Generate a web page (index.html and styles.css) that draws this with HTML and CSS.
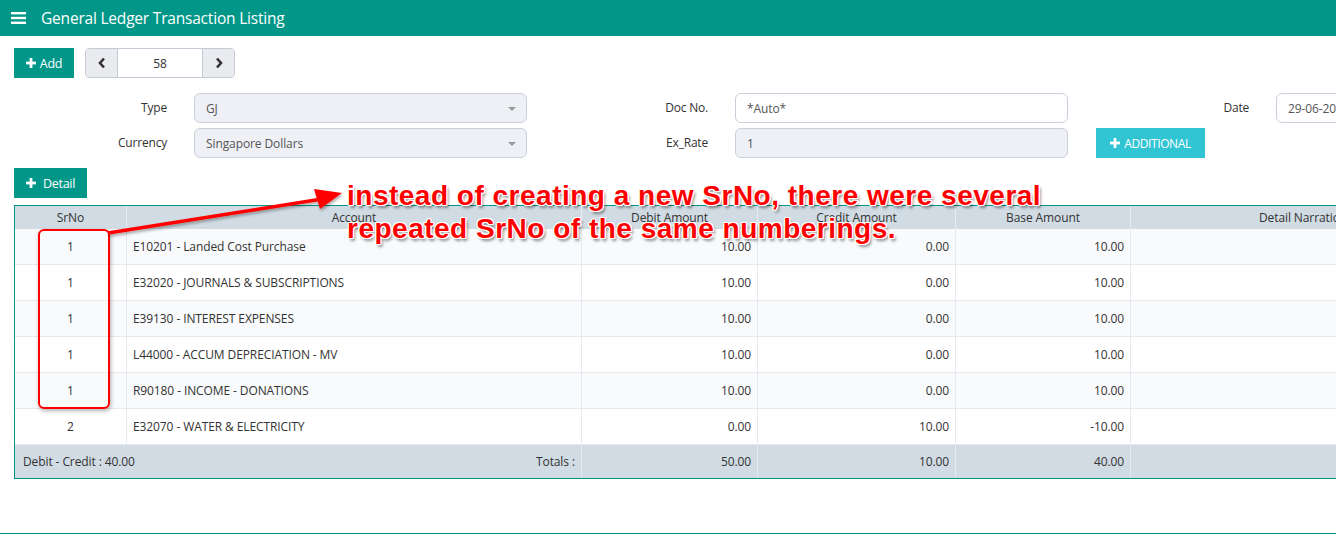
FILE: index.html
```html
<!DOCTYPE html>
<html>
<head>
<meta charset="utf-8">
<link rel="stylesheet" href="styles.css">
</head>
<body>
<div class="page">
  <header class="topbar">
    <svg class="hamburger" width="15" height="12" viewBox="0 0 15 12"><rect x="0" y="0" width="15" height="2.4" fill="#fff"/><rect x="0" y="4.8" width="15" height="2.4" fill="#fff"/><rect x="0" y="9.6" width="15" height="2.4" fill="#fff"/></svg>
    <span class="title">General Ledger Transaction Listing</span>
  </header>

  <main class="main">
    <div class="toolbar">
      <button class="btn btn-teal btn-add"><svg class="plus" width="10" height="10" viewBox="0 0 10 10"><rect x="3.6" y="0" width="2.8" height="10" fill="#fff"/><rect x="0" y="3.6" width="10" height="2.8" fill="#fff"/></svg>Add</button>
      <div class="pager">
        <span class="pg-btn"><svg width="8" height="12" viewBox="0 0 8 12"><path d="M6 1.5 L2 6 L6 10.5" stroke="#333" stroke-width="2.6" fill="none"/></svg></span>
        <span class="pg-val">58</span>
        <span class="pg-btn"><svg width="8" height="12" viewBox="0 0 8 12"><path d="M2 1.5 L6 6 L2 10.5" stroke="#333" stroke-width="2.6" fill="none"/></svg></span>
      </div>
    </div>

    <div class="form">
      <label class="lbl">Type</label>
      <div class="field select">GJ<span class="caret"></span></div>
      <label class="lbl">Doc No.</label>
      <div class="field white">*Auto*</div>
      <label class="lbl">Date</label>
      <div class="field white">29-06-2021</div>

      <label class="lbl">Currency</label>
      <div class="field select">Singapore Dollars<span class="caret"></span></div>
      <label class="lbl">Ex_Rate</label>
      <div class="field">1</div>
      <div class="cell-left"><button class="btn btn-cyan"><svg class="plus" width="10" height="10" viewBox="0 0 10 10"><rect x="3.6" y="0" width="2.8" height="10" fill="#fff"/><rect x="0" y="3.6" width="10" height="2.8" fill="#fff"/></svg>ADDITIONAL</button></div>
      <div></div>
    </div>

    <button class="btn btn-teal btn-detail"><svg class="plus" width="10" height="10" viewBox="0 0 10 10"><rect x="3.6" y="0" width="2.8" height="10" fill="#fff"/><rect x="0" y="3.6" width="10" height="2.8" fill="#fff"/></svg>Detail</button>

    <div class="grid-wrap">
      <table class="grid">
        <colgroup>
          <col class="c-sr"><col class="c-acc"><col class="c-deb"><col class="c-cre"><col class="c-base"><col class="c-nar">
        </colgroup>
        <thead>
          <tr><th>SrNo</th><th>Account</th><th>Debit Amount</th><th>Credit Amount</th><th>Base Amount</th><th>Detail Narration</th></tr>
        </thead>
        <tbody>
          <tr><td class="ctr">1</td><td>E10201 - Landed Cost Purchase</td><td class="num">10.00</td><td class="num">0.00</td><td class="num">10.00</td><td></td></tr>
          <tr><td class="ctr">1</td><td>E32020 - JOURNALS &amp; SUBSCRIPTIONS</td><td class="num">10.00</td><td class="num">0.00</td><td class="num">10.00</td><td></td></tr>
          <tr><td class="ctr">1</td><td>E39130 - INTEREST EXPENSES</td><td class="num">10.00</td><td class="num">0.00</td><td class="num">10.00</td><td></td></tr>
          <tr><td class="ctr">1</td><td>L44000 - ACCUM DEPRECIATION - MV</td><td class="num">10.00</td><td class="num">0.00</td><td class="num">10.00</td><td></td></tr>
          <tr><td class="ctr">1</td><td>R90180 - INCOME - DONATIONS</td><td class="num">10.00</td><td class="num">0.00</td><td class="num">10.00</td><td></td></tr>
          <tr><td class="ctr">2</td><td>E32070 - WATER &amp; ELECTRICITY</td><td class="num">0.00</td><td class="num">10.00</td><td class="num">-10.00</td><td></td></tr>
        </tbody>
        <tfoot>
          <tr><td colspan="2" class="foot-left"><span class="fl">Debit - Credit : 40.00</span><span class="fr">Totals :</span></td><td class="num">50.00</td><td class="num">10.00</td><td class="num">40.00</td><td></td></tr>
        </tfoot>
      </table>
    </div>
  </main>
  <footer class="bottom"></footer>

  <div class="highlight"></div>
  <svg class="arrow" width="360" height="80" viewBox="0 0 360 80">
    <defs><filter id="sh" x="-10%" y="-50%" width="120%" height="200%"><feDropShadow dx="1" dy="2" stdDeviation="1.5" flood-color="#000" flood-opacity="0.35"/></filter></defs>
    <g filter="url(#sh)">
      <path d="M108 45 L322 11" stroke="#f00" stroke-width="3.5" fill="none"/>
      <path d="M342 5 L314 1 L320 21 Z" fill="#f00"/>
    </g>
  </svg>
  <div class="note">instead of creating a new SrNo, there were several<br>repeated SrNo of the same numberings.</div>
</div>
</body>
</html>
```

FILE: styles.css
```css
* { box-sizing: border-box; }
html, body { margin: 0; padding: 0; }
body {
  width: 1336px;
  height: 536px;
  overflow: hidden;
  background: #fff;
  font-family: "Open Sans", "Noto Sans", sans-serif;
  color: #333;
}
.page {
  position: relative;
  width: 1336px;
  height: 536px;
  display: flex;
  flex-direction: column;
  overflow: hidden;
}
.topbar {
  height: 36px;
  background: #009688;
  display: flex;
  align-items: center;
  padding-left: 11px;
  flex: none;
}
.hamburger { margin-right: 15px; }
.title {
  color: #fff;
  font-size: 15.5px;
  letter-spacing: -0.2px;
}
.main {
  flex: 1;
  padding: 12px 0 0 14px;
}
.toolbar {
  display: flex;
  gap: 11px;
  height: 30px;
}
.btn {
  border: none;
  color: #fff;
  font-family: "Open Sans", sans-serif;
  font-size: 12.5px;
  letter-spacing: -0.3px;
  display: inline-flex;
  align-items: center;
  justify-content: center;
  gap: 4px;
  height: 30px;
  padding: 0;
  cursor: pointer;
}
.btn-teal { background: #009688; }
.btn-add { width: 60px; }
.btn-cyan { background: #31c4d2; width: 109px; font-size: 12px; letter-spacing: -0.4px; margin-left: 1px; }
.plus { flex: none; }
.pager {
  width: 150px;
  height: 30px;
  border: 1px solid #c5cad6;
  border-radius: 4px;
  display: flex;
  overflow: hidden;
}
.pg-btn {
  width: 32px;
  background: #e9ebef;
  display: flex;
  align-items: center;
  justify-content: center;
}
.pg-btn:first-child { border-right: 1px solid #c5cad6; }
.pg-btn:last-child { border-left: 1px solid #c5cad6; }
.pg-val {
  flex: 1;
  background: #fff;
  display: flex;
  align-items: center;
  justify-content: center;
  font-size: 12px;
}
.form {
  margin-top: 15px;
  display: grid;
  grid-template-columns: 153px 333px 154px 333px 154px 333px;
  grid-auto-rows: 30px;
  column-gap: 27px;
  row-gap: 5px;
}
.lbl {
  text-align: right;
  font-size: 12px;
  letter-spacing: -0.2px;
  color: #333;
  align-self: start;
  padding-top: 6px;
}
.field {
  border: 1px solid #c9cfdb;
  border-radius: 6px;
  background: #eef0f5;
  font-size: 12px;
  letter-spacing: -0.1px;
  color: #555;
  display: flex;
  align-items: center;
  padding-left: 11px;
  position: relative;
}
.field.white { background: #fff; }
.caret {
  position: absolute;
  right: 10px;
  top: 13px;
  border-left: 4px solid transparent;
  border-right: 4px solid transparent;
  border-top: 4px solid #999;
}
.cell-left { display: flex; align-items: center; }
.btn-detail {
  margin-top: 10px;
  width: 73px;
  gap: 7px;
}
.grid-wrap {
  margin-top: 7px;
  width: 1460px;
}
.grid {
  border-collapse: separate;
  border-spacing: 0;
  table-layout: fixed;
  width: 1460px;
  border: 1px solid #009688;
  font-size: 12px;
  letter-spacing: -0.1px;
}
.c-sr { width: 112px; }
.c-acc { width: 455px; }
.c-deb { width: 176px; }
.c-cre { width: 198px; }
.c-base { width: 175px; }
.c-nar { width: 344px; }
.grid th {
  background: #d1dbe3;
  height: 23px;
  font-weight: normal;
  color: #333;
  border-right: 1px solid #e8ebef;
  padding: 0;
  text-align: center;
}
.grid td {
  height: 36px;
  border-right: 1px solid #e6e9ed;
  border-bottom: 1px solid #e6e9ed;
  padding: 0 6px;
  color: #333;
}
.grid th:last-child, .grid td:last-child { border-right: none; }
.grid tbody tr:nth-child(odd) td { background: #f9fafc; }
.grid tbody tr:nth-child(even) td { background: #fff; }
.grid td.ctr { text-align: center; }
.grid td.num { text-align: right; padding-right: 6px; }
.grid tfoot td {
  height: 33px;
  background: #d1dbe3;
  border-bottom: none;
}
.grid tfoot td.foot-left {
  padding-left: 8px;
  padding-right: 6px;
}
.fl { float: left; }
.fr { float: right; }
.bottom {
  height: 3px;
  border-top: 1px solid #008c80;
  flex: none;
}
.highlight {
  position: absolute;
  left: 38px;
  top: 229px;
  width: 72px;
  height: 180px;
  border: 2px solid #f00;
  border-radius: 6px;
  box-shadow: 1px 2px 4px rgba(0,0,0,0.3);
}
.arrow {
  position: absolute;
  left: 0;
  top: 188px;
}
.note {
  position: absolute;
  left: 347px;
  top: 179px;
  font-family: "Liberation Sans", Arial, sans-serif;
  font-weight: bold;
  font-size: 28px;
  line-height: 33px;
  color: #f00;
  letter-spacing: 0.5px;
  white-space: nowrap;
  text-shadow:
    -1px -1px 0 #fff, 1px -1px 0 #fff, -1px 1px 0 #fff, 1px 1px 0 #fff,
    0 -1px 0 #fff, 0 1px 0 #fff, -1px 0 0 #fff, 1px 0 0 #fff,
    2px 3px 3px rgba(0,0,0,0.45);
}
```
